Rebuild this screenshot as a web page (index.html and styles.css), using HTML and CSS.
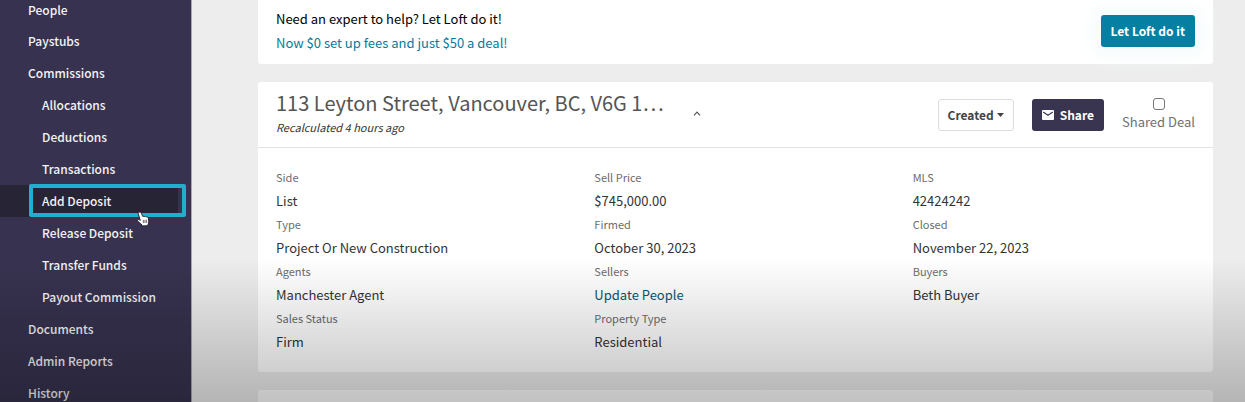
FILE: index.html
```html
<!DOCTYPE html>
<html lang="en">
<head>
<meta charset="utf-8">
<meta name="viewport" content="width=device-width, initial-scale=1">
<title>Deal overview</title>
<link rel="stylesheet" href="styles.css">
</head>
<body>
<div class="app">
  <nav class="sidebar" aria-label="Deal sections">
    <ul class="menu">
      <li><a href="#people">People</a></li>
      <li><a href="#paystubs">Paystubs</a></li>
      <li><a href="#commissions">Commissions</a></li>
      <li class="sub"><a href="#allocations">Allocations</a></li>
      <li class="sub"><a href="#deductions">Deductions</a></li>
      <li class="sub"><a href="#transactions">Transactions</a></li>
      <li class="sub active">
        <a href="#add-deposit" aria-current="page">Add Deposit</a>
        <span class="highlight"></span>
        <svg class="pointer" viewBox="0 0 16 18" width="15" height="16" aria-hidden="true">
          <path d="M3 1.5C4.300.8 5.100 1.400 5.500 2.400L7.200 6.200C8 5.700 8.900 5.800 9.300 6.300C10.200 5.900 11 6.100 11.400 6.800C12.500 6.500 13.200 7 13.400 8L13.900 11.500C14 13 13.600 14.200 13 15.200L12.800 16.500L6.700 16.800L6.300 15.600C4.800 14.600 3.400 12.900 1.700 11.500C.8 10.700 1.200 9.500 2.300 9.500C3 9.500 3.700 10 4.400 10.600L2.200 3.400C1.900 2.500 2.200 1.900 3 1.500Z" fill="#fff" stroke="#1c1a28" stroke-width="1"/>
          <path d="M7.800 10v3.600M9.700 9.900v3.600M11.500 9.800v3.600" fill="none" stroke="#444" stroke-width=".9"/>
        </svg>
      </li>
      <li class="sub"><a href="#release-deposit">Release Deposit</a></li>
      <li class="sub"><a href="#transfer-funds">Transfer Funds</a></li>
      <li class="sub"><a href="#payout">Payout Commission</a></li>
      <li><a href="#documents">Documents</a></li>
      <li><a href="#admin-reports">Admin Reports</a></li>
      <li><a href="#history">History</a></li>
    </ul>
  </nav>
  <main class="content">
    <section class="card promo">
      <div class="promo-text">
        <p>Need an expert to help? Let Loft do it!</p>
        <p class="offer">Now $0 set up fees and just $50 a deal!</p>
      </div>
      <button class="btn btn-teal" type="button">Let Loft do it</button>
    </section>
    <section class="card deal">
      <header class="deal-head">
        <div class="deal-title">
          <h1>113 Leyton Street, Vancouver, BC, V6G 1…</h1>
          <p>Recalculated 4 hours ago</p>
        </div>
        <button class="collapse" type="button" aria-label="Collapse">
          <svg viewBox="0 0 8 5" width="8" height="5" aria-hidden="true"><path d="M1 4.300L4 1.200L7 4.300" fill="none" stroke="#555" stroke-width="1.200"/></svg>
        </button>
        <div class="actions">
          <button class="btn btn-plain" type="button">Created
            <svg viewBox="0 0 7 4" width="7" height="4" aria-hidden="true"><path d="M0 0h7L3.500 4z" fill="#444"/></svg>
          </button>
          <button class="btn btn-dark" type="button">
            <svg viewBox="0 0 12 10" width="12" height="10" aria-hidden="true"><rect width="12" height="10" rx="1" fill="#fff"/><path d="M1.200 2L6 5.200L10.800 2" fill="none" stroke="#39344f" stroke-width="1.200"/></svg>
            Share
          </button>
          <label class="shared"><input type="checkbox"><span>Shared Deal</span></label>
        </div>
      </header>
      <dl class="facts">
        <div><dt>Side</dt><dd>List</dd></div>
        <div><dt>Sell Price</dt><dd>$745,000.00</dd></div>
        <div><dt>MLS</dt><dd>42424242</dd></div>
        <div><dt>Type</dt><dd>Project Or New Construction</dd></div>
        <div><dt>Firmed</dt><dd>October 30, 2023</dd></div>
        <div><dt>Closed</dt><dd>November 22, 2023</dd></div>
        <div><dt>Agents</dt><dd>Manchester Agent</dd></div>
        <div><dt>Sellers</dt><dd><a href="#update-people">Update People</a></dd></div>
        <div><dt>Buyers</dt><dd>Beth Buyer</dd></div>
        <div><dt>Sales Status</dt><dd>Firm</dd></div>
        <div><dt>Property Type</dt><dd>Residential</dd></div>
      </dl>
    </section>
    <section class="card next"></section>
  </main>
  <div class="shade"></div>
</div>
</body>
</html>
```
FILE: styles.css
```css
* { box-sizing: border-box; }

body, h1, p, ul, dl, dd { margin: 0; }

body {
  background: #ededed;
  color: #333;
  font-family: "Noto Sans CJK KR", "Noto Sans CJK SC", "Noto Sans", sans-serif;
  font-size: 13px;
  font-weight: 400;
}

button { font: inherit; cursor: pointer; }
a { text-decoration: none; }

.app {
  position: relative;
  display: flex;
  height: 100vh;
  overflow: hidden;
}

/* Sidebar */
.sidebar {
  flex: 0 0 192px;
  background: #37324f;
  border-right: 1px solid #a9a7b3;
}

.menu { padding: 0; list-style: none; }

.menu a {
  display: block;
  padding: 6px 0 6px 28px;
  color: #f3f2f6;
  font-size: 12px;
  font-weight: 500;
  line-height: 20px;
}

.menu li:first-child a { padding: 0 0 5px 28px; }
.menu .sub a { padding-left: 42px; }
.active { position: relative; }
.menu .active a { margin-right: 13px; background: #272436; }

.highlight {
  position: absolute;
  inset: -1px 5px 0 29px;
  border: 4px solid #21b0cc;
  border-radius: 2px;
}

.pointer {
  position: absolute;
  left: 136px;
  top: 26px;
  z-index: 1;
}

/* Main column */
.content {
  flex: 1;
  display: flex;
  flex-direction: column;
  gap: 18px;
  min-width: 0;
  padding: 0 32px 0 66px;
}

.card {
  flex: none;
  background: #fff;
  border-radius: 3px;
}

.promo {
  display: flex;
  align-items: center;
  justify-content: space-between;
  padding: 7px 18px 9px;
  border-radius: 0 0 3px 3px;
  color: #000;
  line-height: 24px;
}

.offer { color: #057b9c; }

.btn {
  display: flex;
  align-items: center;
  height: 32px;
  padding: 0 10px;
  border: 0;
  border-radius: 3px;
  font-size: 12px;
  font-weight: 700;
  line-height: 20px;
  white-space: nowrap;
}

.btn-teal { background: #0580a3; color: #fff; box-shadow: 0 0 20px 8px #f5fbfc; }
.btn-plain { gap: 3px; padding: 0 9px; background: #fff; border: 1px solid #ddd; color: #444; }
.btn-dark { gap: 6px; background: #39344f; color: #fff; }

.deal-head {
  display: flex;
  align-items: center;
  padding: 7px 18px 10px;
  border-bottom: 1px solid #e2e2e2;
}

.deal-title { min-width: 0; }

.deal-title h1 {
  overflow: hidden;
  color: #555;
  font-size: 20px;
  font-weight: 400;
  line-height: 28px;
  text-overflow: ellipsis;
  white-space: nowrap;
}

.deal-title p {
  font-size: 11px;
  font-style: italic;
  font-weight: 400;
  line-height: 20px;
}

.collapse {
  display: flex;
  margin-left: 17px;
  padding: 12px;
  border: 0;
  background: none;
}

.actions {
  display: flex;
  align-items: center;
  gap: 18px;
  margin-left: auto;
  padding-top: 3px;
}

.shared {
  display: flex;
  flex-direction: column;
  align-items: center;
  gap: 2px;
  color: #707070;
  font-weight: 400;
  line-height: 20px;
  white-space: nowrap;
}

.shared input {
  appearance: none;
  width: 12px;
  height: 12px;
  margin: 0;
  border: 1px solid #777;
  border-radius: 3px;
  background: #fff;
}

.facts {
  display: grid;
  grid-template-columns: repeat(3, 1fr);
  padding: 18px 0;
}

.facts div { padding-left: 18px; }
.facts dt { color: #6c6c6c; font-size: 11px; font-weight: 400; line-height: 23px; }
.facts dd { line-height: 24px; }
.facts a { color: #075473; }

.next { height: 60px; }

/* Fade over the lower part of the page */
.shade {
  position: absolute;
  inset: auto 0 0;
  height: 144px;
  background: linear-gradient(rgba(0, 0, 0, 0), rgba(0, 0, 0, .24));
  pointer-events: none;
}
```
